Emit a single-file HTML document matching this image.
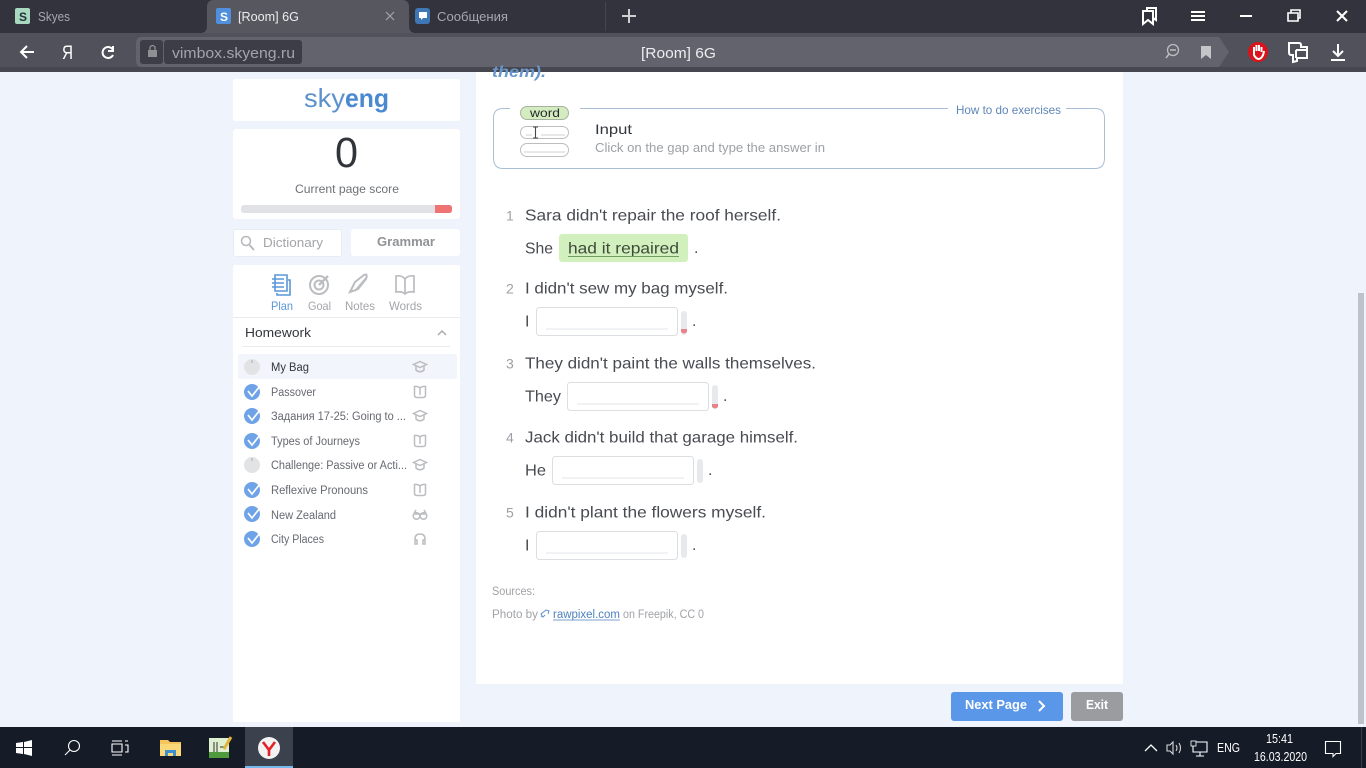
<!DOCTYPE html>
<html lang="en"><head><meta charset="utf-8"><title>[Room] 6G</title>
<style>
html,body{margin:0;padding:0;width:1366px;height:768px;overflow:hidden;background:#eff3fb}
svg{display:block;position:absolute;left:0;top:0}
text{font-family:"Liberation Sans",sans-serif;}
.ic{fill:none;stroke:#bbbdc1;stroke-width:1.5}
.w{fill:none;stroke:#fff;stroke-width:2}
</style></head><body>
<svg width="1366" height="768" viewBox="0 0 1366 768" xmlns="http://www.w3.org/2000/svg">
<defs>
<g id="chk"><circle cx="0" cy="0" r="8" fill="#6fa3e8"/><path d="M-4 -1L0 4L8 -6" fill="none" stroke="#fff" stroke-width="1.700"/></g>
<g id="pend"><circle cx="0" cy="0" r="8" fill="#e2e3e5"/><path d="M0 -7V-4" stroke="#aaa" stroke-width="1"/></g>
<g id="cap" class="ic"><path d="M-6.500 -2.500L0 -5.500L6.500 -2.500L0 0.500Z"/><path d="M-4 -1V3Q0 6.500 4 3V-1"/></g>
<g id="book" class="ic"><path d="M-5.500 -5.500Q-2 -6 0 -4Q2 -6 5.500 -5.500V3Q5.500 5.500 3 5.500H-3Q-5.500 5.500 -5.500 3Z"/><path d="M0 -4V3"/></g>
<g id="field"><rect x="0.500" y="0.500" width="141" height="28" rx="3" fill="#fff" stroke="#dcdee2"/><path d="M10 22H132" stroke="#e3e4e7"/></g>
</defs>

<!-- tabs bar -->
<rect width="1366" height="33" fill="#32333d"/>
<path d="M202 33Q207 32 207 26V7Q207 0 214 0H402Q409 0 409 7V26Q409 32 414 33Z" fill="#56575f"/>
<rect x="605" y="2" width="1" height="29" fill="#44454f"/>
<rect x="15" y="8" width="15" height="16" rx="2" fill="#a9d8c0"/>
<text x="19" y="21" font-size="12" font-weight="bold" fill="#21313a">S</text>
<text x="38" y="21" font-size="13" fill="#a7a8ad" textLength="32" lengthAdjust="spacingAndGlyphs">Skyes</text>
<rect x="216" y="8" width="15" height="16" rx="2" fill="#4f8fdc"/>
<text x="220" y="21" font-size="12" font-weight="bold" fill="#fff">S</text>
<text x="238" y="21" font-size="13" fill="#eceded" textLength="61" lengthAdjust="spacingAndGlyphs">[Room] 6G</text>
<path d="M386 12L394 20M394 12L386 20" stroke="#a5a6aa" stroke-width="1.200"/>
<rect x="415" y="8" width="15" height="16" rx="3" fill="#3f76b5"/>
<path d="M419 12H427V18H423L421 20V18H419Z" fill="#fff"/>
<text x="437" y="21" font-size="13" fill="#a7a8ad" textLength="71" lengthAdjust="spacingAndGlyphs">Сообщения</text>
<path d="M629 9V23M622 16H636" stroke="#cfd0d2" stroke-width="2"/>
<path d="M1143 24V11H1153V24L1148 20Z M1147 11V8H1156V20L1153 18" class="w"/>
<path d="M1191 12H1205M1191 16H1205M1191 20H1205" class="w"/>
<path d="M1240 16H1252" class="w"/>
<path d="M1288 13H1298V21H1288Z M1291 13V10H1300V18H1298" class="w" style="stroke-width:1.600"/>
<path d="M1337 11L1347 21M1347 11L1337 21" class="w"/>

<!-- toolbar -->
<rect y="33" width="1366" height="39" fill="#50515a"/>
<rect y="67" width="1366" height="5" fill="#47484f"/>
<path d="M142 37H1219L1229 52L1219 67H142Q136 67 136 61V43Q136 37 142 37Z" fill="#62636c"/>
<rect x="140" y="40" width="23" height="24" rx="3" fill="#3c3d47"/>
<rect x="148" y="50" width="9" height="7" fill="#8f9095"/>
<path d="M150 50V47Q152.500 44 155 47V50" fill="none" stroke="#8f9095" stroke-width="1.300"/>
<rect x="164" y="40" width="138" height="24" rx="3" fill="#3c3d47"/>
<text x="172" y="58" font-size="15" fill="#a3a4a9" textLength="123" lengthAdjust="spacingAndGlyphs">vimbox.skyeng.ru</text>
<text x="641" y="58" font-size="15" fill="#eeeeef" textLength="75" lengthAdjust="spacingAndGlyphs">[Room] 6G</text>
<path d="M34 52H22M27 46L21 52L27 58" class="w"/>
<text x="62" y="59" font-size="19" fill="#fff" textLength="11" lengthAdjust="spacingAndGlyphs">Я</text>
<path d="M113 46V51H108 M113 50A5.500 5.500 0 1 0 113 55" fill="none" stroke="#fff" stroke-width="2"/>
<circle cx="1173" cy="50" r="5.500" fill="none" stroke="#bcbdc0" stroke-width="1.300"/><path d="M1170 50H1176M1169 54L1166 58" stroke="#bcbdc0" stroke-width="1.500"/>
<path d="M1201 46H1211V59L1206 55L1201 59Z" fill="#c4c5c8"/>
<circle cx="1258" cy="52" r="10" fill="#d9121b"/>
<path d="M1254 52V47M1256.500 51V45M1259 51V45M1261.500 52V47M1254 52V55Q1256 59 1259 59Q1263 58 1264 51" stroke="#fff" stroke-width="2" fill="none"/>
<path d="M1289 43H1299Q1301 43 1301 45V47H1307V58H1297V61L1293 62V55H1291Q1289 55 1289 52Z M1296 50V58M1296 50H1307" fill="none" stroke="#fff" stroke-width="2"/>
<path d="M1338 44V55M1333 51L1338 56L1343 51M1331 60H1345" class="w"/>

<!-- page -->
<rect y="72" width="1366" height="655" fill="#eff3fb"/>
<rect x="1358" y="293" width="6" height="431" fill="#bfc2c9"/>

<!-- sidebar cards -->
<rect x="233" y="79" width="227" height="42" fill="#fff" rx="2"/>
<text x="304" y="107" font-size="26" fill="#5d91cc" textLength="41" lengthAdjust="spacingAndGlyphs">sky</text>
<text x="345" y="107" font-size="26" font-weight="bold" fill="#4a88cf" textLength="44" lengthAdjust="spacingAndGlyphs">eng</text>
<rect x="233" y="129" width="227" height="90" fill="#fff" rx="3"/>
<text x="335" y="167" font-size="43" fill="#31343b" textLength="23" lengthAdjust="spacingAndGlyphs">0</text>
<text x="295" y="193" font-size="12" fill="#6e7177" textLength="104" lengthAdjust="spacingAndGlyphs">Current page score</text>
<rect x="241" y="205" width="211" height="8" rx="3" fill="#e0e2e6"/>
<path d="M435 205H449Q452 205 452 208V210Q452 213 449 213H435Z" fill="#f07373"/>

<rect x="233.500" y="229.500" width="108" height="27" rx="2" fill="#fff" stroke="#e9ecf1"/>
<circle cx="246" cy="241" r="4.500" fill="none" stroke="#b6b8bc" stroke-width="1.500"/><path d="M249.500 245L254 250" stroke="#b6b8bc" stroke-width="1.800"/>
<text x="263" y="247" font-size="13" fill="#a3a5a9" textLength="60" lengthAdjust="spacingAndGlyphs">Dictionary</text>
<rect x="351" y="229" width="109" height="27" rx="3" fill="#fff"/>
<text x="377" y="246" font-size="13" font-weight="bold" fill="#909296" textLength="58" lengthAdjust="spacingAndGlyphs">Grammar</text>

<rect x="233" y="265" width="227" height="457" rx="2" fill="#fff"/>
<path d="M275 275H287V291H275Z M288 280H290V295H277V293" fill="none" stroke="#5a97d8" stroke-width="1.600"/>
<path d="M272 279H284M272 283H284M272 287H284" stroke="#5a97d8" stroke-width="1.400"/>
<circle cx="319" cy="285" r="9" class="ic" style="stroke-width:2"/><circle cx="319" cy="285" r="4.500" class="ic" style="stroke-width:2"/><path d="M319 285L328 276" class="ic" style="stroke-width:2.400"/>
<path d="M350 292L355 282L364 275Q368 273 366 279L358 289Z M355 291L367 277" class="ic" style="stroke-width:2"/>
<path d="M396 276Q402 275 405 279Q408 275 414 276V292Q408 291 405 294Q402 291 396 292Z M405 279V294" class="ic" style="stroke-width:1.700"/>
<text x="271" y="310" font-size="12" fill="#5a97d8" textLength="22" lengthAdjust="spacingAndGlyphs">Plan</text>
<text x="308" y="310" font-size="12" fill="#a3a5a9" textLength="23" lengthAdjust="spacingAndGlyphs">Goal</text>
<text x="345" y="310" font-size="12" fill="#a3a5a9" textLength="30" lengthAdjust="spacingAndGlyphs">Notes</text>
<text x="389" y="310" font-size="12" fill="#a3a5a9" textLength="33" lengthAdjust="spacingAndGlyphs">Words</text>
<rect x="233" y="317" width="227" height="1" fill="#e8eaee"/>
<text x="245" y="337" font-size="13" fill="#33363c" textLength="66" lengthAdjust="spacingAndGlyphs">Homework</text>
<path d="M438 335L442 331L446 335" fill="none" stroke="#a8aaae" stroke-width="1.500"/>
<rect x="243" y="346" width="207" height="1" fill="#e8eaee"/>

<rect x="238" y="354" width="219" height="25" rx="2" fill="#f2f5fb"/>
<use href="#pend" x="252" y="367"/>
<text x="271" y="371" font-size="11.500" fill="#33363c" textLength="38" lengthAdjust="spacingAndGlyphs">My Bag</text>
<use href="#cap" x="420" y="367"/>
<use href="#chk" x="252" y="392"/>
<text x="271" y="396" font-size="11.500" fill="#666970" textLength="45" lengthAdjust="spacingAndGlyphs">Passover</text>
<use href="#book" x="420" y="392"/>
<use href="#chk" x="252" y="416"/>
<text x="271" y="420" font-size="11.500" fill="#666970" textLength="135" lengthAdjust="spacingAndGlyphs">Задания 17-25: Going to ...</text>
<use href="#cap" x="420" y="416"/>
<use href="#chk" x="252" y="441"/>
<text x="271" y="445" font-size="11.500" fill="#666970" textLength="89" lengthAdjust="spacingAndGlyphs">Types of Journeys</text>
<use href="#book" x="420" y="441"/>
<use href="#pend" x="252" y="465"/>
<text x="271" y="469" font-size="11.500" fill="#666970" textLength="136" lengthAdjust="spacingAndGlyphs">Challenge: Passive or Acti...</text>
<use href="#cap" x="420" y="465"/>
<use href="#chk" x="252" y="490"/>
<text x="271" y="494" font-size="11.500" fill="#666970" textLength="97" lengthAdjust="spacingAndGlyphs">Reflexive Pronouns</text>
<use href="#book" x="420" y="490"/>
<use href="#chk" x="252" y="514"/>
<text x="271" y="519" font-size="11.500" fill="#666970" textLength="65" lengthAdjust="spacingAndGlyphs">New Zealand</text>
<g class="ic"><circle cx="416.500" cy="516" r="3.300"/><circle cx="423.500" cy="516" r="3.300"/><path d="M414 513L416 510M426 513L424 510M414 514H426"/></g>
<use href="#chk" x="252" y="539"/>
<text x="271" y="543" font-size="11.500" fill="#666970" textLength="53" lengthAdjust="spacingAndGlyphs">City Places</text>
<path d="M415 544V539Q415 534 420 534Q425 534 425 539V544M415 540H417V544H415ZM423 540H425V544H423Z" class="ic"/>

<!-- main panel -->
<rect x="476" y="72" width="647" height="612" fill="#fff"/>
<text x="492" y="77" font-size="16" font-style="italic" font-weight="bold" fill="#6a96c9" textLength="54" lengthAdjust="spacingAndGlyphs">them).</text>
<path d="M510 108.500H503Q493.500 108.500 493.500 118V158Q493.500 168.500 503 168.500H1095Q1104.500 168.500 1104.500 158V118Q1104.500 108.500 1095 108.500H1066M948 108.500H580" fill="none" stroke="#a9bfd6"/>
<text x="956" y="114" font-size="12" fill="#5e86b8" textLength="105" lengthAdjust="spacingAndGlyphs">How to do exercises</text>
<rect x="520.500" y="106.500" width="48" height="13" rx="6.500" fill="#d4ecc0" stroke="#a7b3a0"/>
<text x="530" y="117" font-size="12" fill="#26292c" textLength="30" lengthAdjust="spacingAndGlyphs">word</text>
<rect x="520.500" y="126.500" width="48" height="12" rx="6" fill="#fff" stroke="#bcbec0"/>
<rect x="520.500" y="143.500" width="48" height="13" rx="6.500" fill="#fff" stroke="#bcbec0"/>
<path d="M524 152H565M526 135H532M541 135H565" stroke="#cfd0d2"/>
<path d="M533 127H538M535.500 127V138M533 138H538" stroke="#44474b" stroke-width="1.100" fill="none"/>
<text x="595" y="134" font-size="14" fill="#33363c" textLength="37" lengthAdjust="spacingAndGlyphs">Input</text>
<text x="595" y="152" font-size="13" fill="#9da0a4" textLength="230" lengthAdjust="spacingAndGlyphs">Click on the gap and type the answer in</text>

<g font-size="16" fill="#484b51" transform="translate(0,0.500)">
<text x="506" y="220" font-size="14" fill="#9da0a4">1</text>
<text x="525" y="220" textLength="256" lengthAdjust="spacingAndGlyphs">Sara didn't repair the roof herself.</text>
<text x="525" y="253" textLength="28" lengthAdjust="spacingAndGlyphs">She</text>
<text x="506" y="293" font-size="14" fill="#9da0a4">2</text>
<text x="525" y="293" textLength="203" lengthAdjust="spacingAndGlyphs">I didn't sew my bag myself.</text>
<text x="525" y="326">I</text>
<text x="506" y="368" font-size="14" fill="#9da0a4">3</text>
<text x="525" y="368" textLength="291" lengthAdjust="spacingAndGlyphs">They didn't paint the walls themselves.</text>
<text x="525" y="401" textLength="36" lengthAdjust="spacingAndGlyphs">They</text>
<text x="506" y="442" font-size="14" fill="#9da0a4">4</text>
<text x="525" y="442" textLength="273" lengthAdjust="spacingAndGlyphs">Jack didn't build that garage himself.</text>
<text x="525" y="475" textLength="21" lengthAdjust="spacingAndGlyphs">He</text>
<text x="506" y="517" font-size="14" fill="#9da0a4">5</text>
<text x="525" y="517" textLength="241" lengthAdjust="spacingAndGlyphs">I didn't plant the flowers myself.</text>
<text x="525" y="550">I</text>
</g>
<rect x="559" y="234" width="129" height="28" rx="3" fill="#d2f0bd"/>
<text x="568" y="253.500" font-size="16" fill="#3f4a3c" textLength="111" lengthAdjust="spacingAndGlyphs">had it repaired</text>
<path d="M568 256.500H679" stroke="#6f9d5f"/>
<g font-size="16" fill="#484b51">
<text x="694" y="253">.</text><text x="692" y="326">.</text><text x="723" y="401">.</text><text x="708" y="475">.</text><text x="692" y="550">.</text>
</g>

<use href="#field" x="536" y="307"/>
<rect x="681" y="311" width="6" height="24" rx="3" fill="#e7e9ec"/><path d="M681 329H687V332Q684 335 681 332Z" fill="#e8838c"/>
<use href="#field" x="567" y="382"/>
<rect x="712" y="385" width="6" height="24" rx="3" fill="#e7e9ec"/><path d="M712 404H718V407Q715 410 712 407Z" fill="#e8838c"/>
<use href="#field" x="552" y="456"/>
<rect x="697" y="459" width="6" height="24" rx="3" fill="#e7e9ec"/>
<use href="#field" x="536" y="531"/>
<rect x="681" y="534" width="6" height="24" rx="3" fill="#e7e9ec"/>

<text x="492" y="595" font-size="11.500" fill="#a0a2a6" textLength="43" lengthAdjust="spacingAndGlyphs">Sources:</text>
<text x="492" y="618" font-size="11.500" fill="#a0a2a6" textLength="46" lengthAdjust="spacingAndGlyphs">Photo by</text>
<path d="M542 616L541 614L546 610L549 611L548 614M545 615L543 617L541 616" fill="none" stroke="#5d91cc"/>
<text x="553" y="618" font-size="11.500" fill="#4f82bd" textLength="67" lengthAdjust="spacingAndGlyphs">rawpixel.com</text>
<path d="M553 620H620" stroke="#4f82bd" stroke-width=".8"/>
<text x="623" y="618" font-size="11.500" fill="#a0a2a6" textLength="81" lengthAdjust="spacingAndGlyphs">on Freepik, CC 0</text>

<rect x="951" y="692" width="112" height="29" rx="3" fill="#5a97e8"/>
<text x="965" y="709" font-size="13" font-weight="bold" fill="#fff" textLength="62" lengthAdjust="spacingAndGlyphs">Next Page</text>
<path d="M1039 701L1044 706L1039 711" fill="none" stroke="#fff" stroke-width="2"/>
<rect x="1071" y="692" width="52" height="29" rx="3" fill="#9a9c9f"/>
<text x="1086" y="709" font-size="13" font-weight="bold" fill="#fff" textLength="22" lengthAdjust="spacingAndGlyphs">Exit</text>

<!-- taskbar -->
<rect y="727" width="1366" height="41" fill="#151b27"/>
<path d="M16 743L23 742V747H16ZM24 742L32 740V747H24ZM16 748H23V754L16 753ZM24 748H32V756L24 754Z" fill="#fff"/>
<circle cx="74" cy="746" r="5.500" fill="none" stroke="#fff" stroke-width="1.100"/><path d="M70 750L65 755" stroke="#fff" stroke-width="1.100"/>
<path d="M112 744H122V752H112ZM112 741H122M112 755H122M125 741H128M125 745H128V752H125" fill="none" stroke="#fff" stroke-width="1.100"/>
<path d="M160 740H168L170 742H181V756H160Z" fill="#f5c55c"/>
<rect x="160" y="744" width="21" height="12" fill="#fbd878"/><rect x="165" y="750" width="11" height="6" fill="#3f8fd0"/><rect x="168" y="753" width="5" height="3" fill="#fbd878"/>
<rect x="209" y="738" width="20" height="20" fill="#dff0d0"/><rect x="209" y="752" width="20" height="6" fill="#4f9a3c"/>
<path d="M214 742V752M217 742V752M220 747H224" stroke="#333"/><path d="M224 749L231 737" stroke="#e3b43a" stroke-width="3"/>
<rect x="245" y="727" width="48" height="41" fill="#3b414d"/><rect x="245" y="766" width="48" height="2" fill="#76b9ed"/>
<circle cx="269" cy="748" r="11" fill="#f2f2f2"/>
<path d="M263 742L269 750L275 742M269 749V756" fill="none" stroke="#e32027" stroke-width="2.600"/>
<path d="M1145 751L1151 745L1157 751" fill="none" stroke="#fff" stroke-width="1.300"/>
<path d="M1167 745H1170L1173 742V754L1170 751H1167Z M1176 745Q1178 748 1176 751M1179 743Q1182 748 1179 753" fill="none" stroke="#d8d9db" stroke-width="1.100"/>
<path d="M1193 742H1207V752H1193ZM1200 752V756M1196 756H1204" fill="none" stroke="#fff" stroke-width="1.100"/><rect x="1191" y="741" width="5" height="5" fill="#151b27" stroke="#fff" stroke-width=".8"/>
<text x="1217" y="752" font-size="13" fill="#fff" textLength="23" lengthAdjust="spacingAndGlyphs">ENG</text>
<text x="1266" y="743" font-size="12.500" fill="#fff" textLength="27" lengthAdjust="spacingAndGlyphs">15:41</text>
<text x="1254" y="761" font-size="12.500" fill="#fff" textLength="53" lengthAdjust="spacingAndGlyphs">16.03.2020</text>
<path d="M1325.500 741.500H1340.500V753.500H1336L1333 756.500V753.500H1325.500Z" fill="none" stroke="#fff" stroke-width="1.100"/>
<rect x="1361" y="727" width="1" height="41" fill="#3a3f4a"/>
</svg>
</body></html>
